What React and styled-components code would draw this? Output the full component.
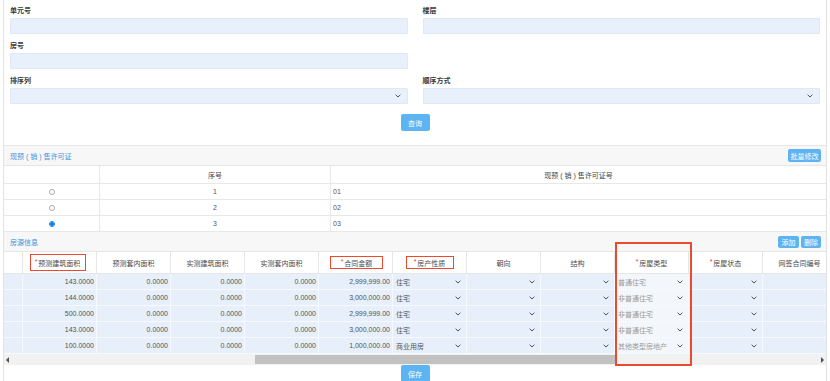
import React from 'react';
import styled, { createGlobalStyle } from 'styled-components';

const GlobalStyle = createGlobalStyle`
  html, body { margin: 0; padding: 0; background: #fff; }
  body {
    font-family: "Liberation Sans", "Noto Sans CJK SC", sans-serif;
    font-size: 7px;
    color: #333;
  }
  * { box-sizing: border-box; }
`;

const Page = styled.div`
  width: 830px;
  height: 381px;
  overflow: hidden;
  padding: 0 3px;
`;

const Panel = styled.div`
  position: relative;
  height: 100%;
  border-left: 1px solid #e3e3e3;
  border-right: 1px solid #e3e3e3;
`;

const Form = styled.div`
  padding: 6px 6px 14px 6px;
`;

const FieldGrid = styled.div`
  display: grid;
  grid-template-columns: 1fr 1fr;
  column-gap: 15px;
  row-gap: 7px;
`;

const Field = styled.div`
  display: flex;
  flex-direction: column;
`;

const Label = styled.div`
  height: 10px;
  line-height: 10px;
  margin-bottom: 2px;
  font-weight: bold;
  color: #3a3a3a;
`;

const Input = styled.div`
  position: relative;
  height: 16px;
  background: #e8f0fc;
  border: 1px solid #dfe8f4;
  border-radius: 1px;
`;

const InputChevron = styled.span`
  position: absolute;
  right: 6px;
  top: 5px;
  display: flex;
`;

const Center = styled.div`
  display: flex;
  justify-content: center;
  margin-top: ${p => p.$mt || 0}px;
`;

const Button = styled.button`
  border: none;
  margin: 0;
  padding: 0;
  width: ${p => p.$w}px;
  height: ${p => p.$h}px;
  background: #5db4f2;
  color: #fff;
  font-family: inherit;
  font-size: 7px;
  border-radius: 2px;
  display: flex;
  align-items: center;
  justify-content: center;
`;

const SectionHead = styled.div`
  height: ${p => p.$h}px;
  background: #f7f7f7;
  border-top: ${p => (p.$top ? '1px solid #e6e6e6' : 'none')};
  border-bottom: 1px solid #e6e6e6;
  display: flex;
  align-items: center;
  justify-content: space-between;
  padding: 0 5px 0 6px;
`;

const SectionTitle = styled.span`
  color: #3d93db;
`;

const ButtonGroup = styled.div`
  display: flex;
  gap: 2px;
`;

const PermitRow = styled.div`
  display: grid;
  grid-template-columns: 96px 231px 1fr;
  height: ${p => p.$h}px;
  border-bottom: 1px solid #e8e8e8;
`;

const PermitCell = styled.div`
  display: flex;
  align-items: center;
  justify-content: ${p => p.$align || 'center'};
  padding: 0 2px;
  color: ${p => (p.$head ? '#444' : '#555')};
  border-right: 1px solid #e8e8e8;
  &:last-child { border-right: none; }
`;

const Radio = styled.span`
  width: 6px;
  height: 6px;
  border-radius: 50%;
  border: 1px solid ${p => (p.$on ? '#1a7fe6' : '#a8a8a8')};
  background: ${p => (p.$on ? 'radial-gradient(circle, #1a7fe6 0 1.6px, #fff 1.8px)' : '#fff')};
`;

const Scroller = styled.div`
  width: 100%;
  overflow: hidden;
`;

const GridRow = styled.div`
  display: grid;
  grid-template-columns: 19px repeat(11, 74px);
  width: max-content;
  height: ${p => p.$h}px;
`;

const HeadCell = styled.div`
  display: flex;
  align-items: center;
  justify-content: center;
  background: #fff;
  color: #4a4a4a;
  border-right: 1px solid #e6e6e6;
  border-bottom: 1px solid #e6e6e6;
`;

const Req = styled.span`
  color: #e8412c;
  margin-right: 1px;
  position: relative;
  top: -1px;
`;

const Marked = styled.span`
  display: inline-flex;
  align-items: center;
  justify-content: center;
  width: ${p => p.$w}px;
  height: ${p => p.$h}px;
  border: 1.5px solid #ec4a2c;
  margin-left: ${p => p.$dx || 0}px;
`;

const DataCell = styled.div`
  display: flex;
  align-items: center;
  justify-content: ${p => (p.$num ? 'flex-end' : 'space-between')};
  padding: ${p => (p.$num ? '0 2px 0 0' : '0 5px 0 3px')};
  background: ${p => (p.$dim ? '#f3f7fc' : '#e6effa')};
  color: ${p => (p.$dim ? '#9a9a9a' : '#555')};
  border-right: 1px solid #f6f9fd;
  border-bottom: 1px solid #f6f9fd;
  white-space: nowrap;
`;

const ScrollBar = styled.div`
  position: relative;
  height: 11px;
  background: #f1f1f1;
  display: flex;
  align-items: center;
  justify-content: space-between;
  padding: 0 2px;
`;

const Arrow = styled.span`
  width: 0;
  height: 0;
  border-top: 3px solid transparent;
  border-bottom: 3px solid transparent;
  ${p => (p.$dir === 'left' ? 'border-right: 3px solid #505050;' : 'border-left: 3px solid #505050;')}
`;

const Thumb = styled.span`
  position: absolute;
  top: 1px;
  bottom: 1px;
  left: ${p => p.$left}px;
  width: ${p => p.$width}px;
  background: #c1c1c1;
`;

const Highlight = styled.div`
  position: absolute;
  left: 611px;
  top: 242px;
  width: 77px;
  height: 124px;
  border: 2px solid #ec4a2c;
  pointer-events: none;
`;

const Chevron = () => (
  <svg width="6" height="4" viewBox="0 0 6 4">
    <path d="M0.6 0.7 L3 3 L5.4 0.7" fill="none" stroke="#555" strokeWidth="1" />
  </svg>
);

const permits = [
  { n: '1', code: '01', on: false },
  { n: '2', code: '02', on: false },
  { n: '3', code: '03', on: true },
];

const houses = [
  ['143.0000', '2,999,999.00', '住宅', '普通住宅'],
  ['144.0000', '3,000,000.00', '住宅', '非普通住宅'],
  ['500.0000', '2,999,999.00', '住宅', '非普通住宅'],
  ['143.0000', '3,000,000.00', '住宅', '非普通住宅'],
  ['100.0000', '1,000,000.00', '商业用房', '其他类型房地产'],
];

const SelectCell = ({ text, dim }) => (
  <DataCell $dim={dim}>
    <span>{text}</span>
    <Chevron />
  </DataCell>
);

export default function App() {
  return (
    <>
      <GlobalStyle />
      <Page>
        <Panel>
          <Form>
            <FieldGrid>
              <Field>
                <Label>单元号</Label>
                <Input />
              </Field>
              <Field>
                <Label>楼层</Label>
                <Input />
              </Field>
              <Field>
                <Label>房号</Label>
                <Input />
              </Field>
              <div />
              <Field>
                <Label>排序列</Label>
                <Input>
                  <InputChevron><Chevron /></InputChevron>
                </Input>
              </Field>
              <Field>
                <Label>顺序方式</Label>
                <Input>
                  <InputChevron><Chevron /></InputChevron>
                </Input>
              </Field>
            </FieldGrid>
            <Center $mt={10}>
              <Button $w={29} $h={17}>查询</Button>
            </Center>
          </Form>

          <SectionHead $h={21} $top>
            <SectionTitle>现预 ( 销 ) 售许可证</SectionTitle>
            <Button $w={33} $h={13}>批量修改</Button>
          </SectionHead>
          <PermitRow $h={18}>
            <PermitCell $head />
            <PermitCell $head>序号</PermitCell>
            <PermitCell $head>现预 ( 销 ) 售许可证号</PermitCell>
          </PermitRow>
          {permits.map(p => (
            <PermitRow key={p.n} $h={16}>
              <PermitCell><Radio $on={p.on} /></PermitCell>
              <PermitCell>{p.n}</PermitCell>
              <PermitCell $align="flex-start">{p.code}</PermitCell>
            </PermitRow>
          ))}

          <SectionHead $h={20}>
            <SectionTitle>房源信息</SectionTitle>
            <ButtonGroup>
              <Button $w={21} $h={12}>添加</Button>
              <Button $w={20} $h={12}>删除</Button>
            </ButtonGroup>
          </SectionHead>
          <Scroller>
            <GridRow $h={22}>
              <HeadCell />
              <HeadCell>
                <Marked $w={56} $h={17} $dx={-4}><Req>*</Req>预测建筑面积</Marked>
              </HeadCell>
              <HeadCell>预测套内面积</HeadCell>
              <HeadCell>实测建筑面积</HeadCell>
              <HeadCell>实测套内面积</HeadCell>
              <HeadCell>
                <Marked $w={53} $h={13} $dx={2}><Req>*</Req>合同金额</Marked>
              </HeadCell>
              <HeadCell>
                <Marked $w={48} $h={13}><Req>*</Req>房产性质</Marked>
              </HeadCell>
              <HeadCell>朝向</HeadCell>
              <HeadCell>结构</HeadCell>
              <HeadCell><Req>*</Req>房屋类型</HeadCell>
              <HeadCell><Req>*</Req>房屋状态</HeadCell>
              <HeadCell>网签合同编号</HeadCell>
            </GridRow>
            {houses.map((h, i) => (
              <GridRow key={i} $h={16}>
                <DataCell $num />
                <DataCell $num>{h[0]}</DataCell>
                <DataCell $num>0.0000</DataCell>
                <DataCell $num>0.0000</DataCell>
                <DataCell $num>0.0000</DataCell>
                <DataCell $num>{h[1]}</DataCell>
                <SelectCell text={h[2]} />
                <SelectCell text="" />
                <SelectCell text="" />
                <SelectCell text={h[3]} dim />
                <SelectCell text="" />
                <DataCell $num />
              </GridRow>
            ))}
          </Scroller>
          <ScrollBar>
            <Arrow $dir="left" />
            <Thumb $left={251} $width={360} />
            <Arrow $dir="right" />
          </ScrollBar>
          <Center $mt={0}>
            <Button $w={29} $h={17}>保存</Button>
          </Center>
          <Highlight />
        </Panel>
      </Page>
    </>
  );
}
